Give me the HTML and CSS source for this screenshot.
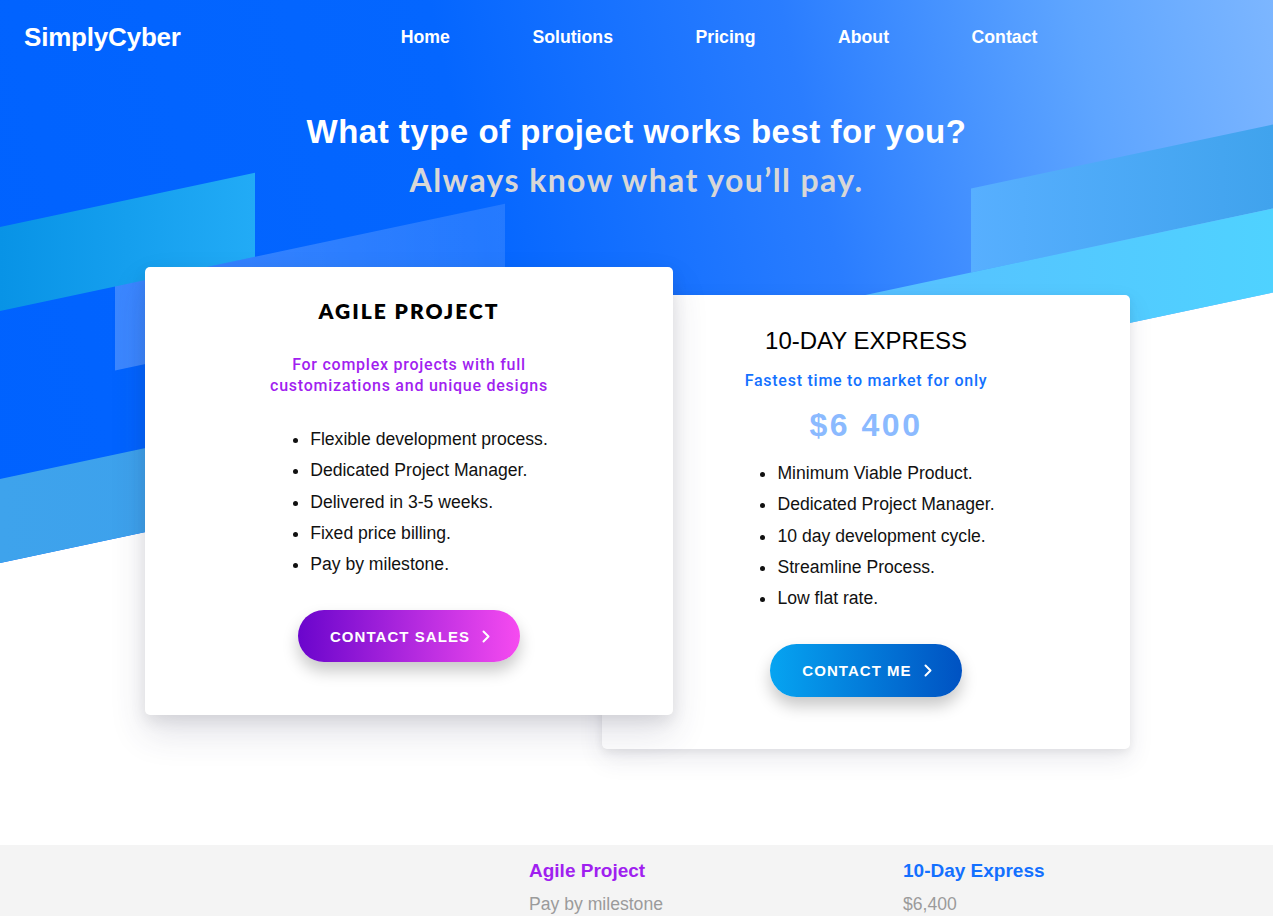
FILE: index.html
```html
<!DOCTYPE html>
<html lang="en">
<head>
<meta charset="utf-8">
<title>SimplyCyber – Pricing</title>
<link rel="stylesheet" href="styles.css">
</head>
<body>
<div class="page">
  <div class="hero-bg" aria-hidden="true">
    <span class="stripe stripe-a"></span>
    <span class="stripe stripe-b"></span>
    <span class="stripe stripe-c"></span>
    <span class="stripe stripe-d"></span>
    <span class="stripe stripe-e"></span>
  </div>

  <header class="topbar">
    <a class="logo" href="#">SimplyCyber</a>
    <nav class="nav">
      <a href="#">Home</a>
      <a href="#">Solutions</a>
      <a href="#">Pricing</a>
      <a href="#">About</a>
      <a href="#">Contact</a>
    </nav>
  </header>

  <section class="intro">
    <h1 class="intro-title">What type of project works best for you?</h1>
    <h2 class="intro-sub">Always know what you’ll pay.</h2>
  </section>

  <section class="plans">
    <article class="plan plan-agile">
      <h3 class="plan-title plan-title-agile">AGILE PROJECT</h3>
      <p class="plan-lead plan-lead-agile">For complex projects with full<br>customizations and unique designs</p>
      <ul class="plan-list plan-list-agile">
        <li>Flexible development process.</li>
        <li>Dedicated Project Manager.</li>
        <li>Delivered in 3-5 weeks.</li>
        <li>Fixed price billing.</li>
        <li>Pay by milestone.</li>
      </ul>
      <div class="plan-action">
        <a class="btn btn-sales" href="#">CONTACT SALES
          <svg class="chev" width="8" height="13" viewBox="0 0 8 13"><polyline points="1.5,1.5 6.5,6.5 1.5,11.5" fill="none" stroke="#fff" stroke-width="2" stroke-linecap="round" stroke-linejoin="round"/></svg>
        </a>
      </div>
    </article>

    <article class="plan plan-express">
      <h3 class="plan-title plan-title-express">10-DAY EXPRESS</h3>
      <p class="plan-lead plan-lead-express">Fastest time to market for only</p>
      <p class="plan-price">$6 400</p>
      <ul class="plan-list plan-list-express">
        <li>Minimum Viable Product.</li>
        <li>Dedicated Project Manager.</li>
        <li>10 day development cycle.</li>
        <li>Streamline Process.</li>
        <li>Low flat rate.</li>
      </ul>
      <div class="plan-action">
        <a class="btn btn-me" href="#">CONTACT ME
          <svg class="chev" width="8" height="13" viewBox="0 0 8 13"><polyline points="1.5,1.5 6.5,6.5 1.5,11.5" fill="none" stroke="#fff" stroke-width="2" stroke-linecap="round" stroke-linejoin="round"/></svg>
        </a>
      </div>
    </article>
  </section>

  <section class="compare">
    <div class="compare-row">
      <div class="compare-cell"></div>
      <div class="compare-cell compare-head compare-agile">Agile Project</div>
      <div class="compare-cell compare-head compare-express">10-Day Express</div>
    </div>
    <div class="compare-row">
      <div class="compare-cell"></div>
      <div class="compare-cell compare-val">Pay by milestone</div>
      <div class="compare-cell compare-val">$6,400</div>
    </div>
  </section>
</div>
</body>
</html>
```

FILE: styles.css
```css
* { box-sizing: border-box; }

html, body {
  margin: 0;
  padding: 0;
  background: #fff;
}

body {
  font-family: "Liberation Sans", Arial, sans-serif;
  color: #111;
}

.page {
  position: relative;
  overflow: hidden;
  min-height: 916px;
}

/* skewed hero backdrop */
.hero-bg {
  position: absolute;
  top: 0;
  left: 0;
  width: 100%;
  height: 563px;
  transform: skewY(-12deg);
  transform-origin: 0 0;
  background: linear-gradient(78deg, #0062ff 0%, #0466ff 38%, #2a7dff 62%, #5ea5ff 82%, #85bbff 100%);
  display: grid;
  grid-template-columns: 115px 140px 250px 195px 271px 1fr;
  grid-template-rows: 1fr repeat(4, 84px);
  z-index: 0;
}

.stripe { display: block; }

.stripe-a {
  grid-column: 1 / 3;
  grid-row: 2;
  background: linear-gradient(90deg, #0893e6, #22abf6);
}
.stripe-b {
  grid-column: 2 / 4;
  grid-row: 3;
  background: linear-gradient(90deg, rgba(255,255,255,.23), rgba(255,255,255,.12));
}
.stripe-c {
  grid-column: 6 / 7;
  grid-row: 4;
  background: linear-gradient(90deg, #57afff, #40a3ed);
}
.stripe-d {
  grid-column: 1 / 4;
  grid-row: 5;
  background: linear-gradient(90deg, #3ea3ec, #3b9ded);
}
.stripe-e {
  grid-column: 5 / 7;
  grid-row: 5;
  background: linear-gradient(90deg, #5bb8ff, #4fd2ff);
}

/* header */
.topbar {
  position: relative;
  z-index: 1;
  height: 74px;
  display: flex;
  align-items: center;
  padding-left: 24px;
}

.logo {
  color: #fff;
  text-decoration: none;
  font-weight: 700;
  font-size: 26px;
  letter-spacing: -0.2px;
}

.nav {
  display: flex;
  gap: 82.5px;
  margin-left: 220px;
}

.nav a {
  color: #fff;
  text-decoration: none;
  font-weight: 700;
  font-size: 17.7px;
}

/* intro */
.intro {
  position: relative;
  z-index: 1;
  text-align: center;
  padding-top: 38px;
}

.intro-title {
  margin: 0;
  font-size: 33px;
  line-height: 40px;
  font-weight: 700;
  color: #fff;
  letter-spacing: 0.5px;
}

.intro-sub {
  margin: 8px 0 0;
  font-family: Lato, "Open Sans", sans-serif;
  font-size: 32px;
  line-height: 40px;
  font-weight: 700;
  color: #d7d7d7;
  letter-spacing: 1.4px;
}

/* plans */
.plans {
  position: relative;
  z-index: 1;
  display: flex;
  justify-content: center;
  align-items: flex-start;
  margin-top: 67px;
  padding-left: 2px;
}

.plan {
  width: 528px;
  background: #fff;
  border-radius: 5px;
  text-align: center;
  box-shadow: 0 18px 36px rgba(50, 50, 93, 0.14), 0 6px 16px rgba(0, 0, 0, 0.09);
}

.plan-agile {
  position: relative;
  z-index: 2;
  padding: 31px 0 53px;
}

.plan-express {
  position: relative;
  z-index: 1;
  margin-left: -71px;
  margin-top: 28px;
  padding: 32px 0 52px;
  box-shadow: 0 10px 24px rgba(50, 50, 93, 0.1), 0 3px 8px rgba(0, 0, 0, 0.07);
}

.plan-title {
  margin: 0;
  color: #000;
}

.plan-title-agile {
  font-family: Lato, "Open Sans", sans-serif;
  font-size: 21px;
  line-height: 26px;
  font-weight: 800;
  letter-spacing: 2px;
}

.plan-title-express {
  font-size: 24px;
  line-height: 28px;
  font-weight: 400;
}

.plan-lead {
  margin: 0;
  font-family: Roboto, "Liberation Sans", sans-serif;
  font-weight: 500;
  font-size: 16px;
  line-height: 21px;
  letter-spacing: 0.75px;
}

.plan-lead-agile {
  margin-top: 30px;
  color: #a11ff0;
}

.plan-lead-express {
  margin-top: 15px;
  color: #1371ff;
}

.plan-price {
  margin: 14px 0 0;
  font-size: 32px;
  line-height: 40px;
  font-weight: 700;
  letter-spacing: 2.5px;
  color: #8bbaff;
}

.plan-list {
  display: inline-block;
  text-align: left;
  margin: 0;
  padding-left: 40px;
  font-size: 17.6px;
  line-height: 31.3px;
  color: #111;
}

.plan-list-agile { margin-top: 28px; }
.plan-list-express { margin-top: 13px; }

.plan-action {
  margin-top: 30px;
}

.btn {
  display: inline-flex;
  align-items: center;
  gap: 12px;
  border-radius: 30px;
  padding: 0 30px 0 32px;
  color: #fff;
  text-decoration: none;
  font-weight: 700;
  font-size: 15px;
  letter-spacing: 1.05px;
  box-shadow: 0 9px 16px rgba(0, 0, 0, 0.22);
}

.btn-sales {
  height: 52px;
  background: linear-gradient(90deg, #6a05cc, #f64bf0);
}

.btn-me {
  height: 53px;
  background: linear-gradient(90deg, #06a4f1, #0052c2);
}

.chev { display: block; }

/* comparison strip */
.compare {
  position: relative;
  z-index: 1;
  margin-top: 96px;
  background: #f4f4f4;
  padding: 13px 0 20px 157px;
}

.compare-row {
  display: grid;
  grid-template-columns: 372px 374px 1fr;
}

.compare-head {
  font-weight: 700;
  font-size: 19px;
  line-height: 26px;
}

.compare-agile { color: #a01ff0; }
.compare-express { color: #1370ff; }

.compare-val {
  margin-top: 7px;
  font-size: 17.6px;
  line-height: 26px;
  color: #9b9b9b;
}
```
